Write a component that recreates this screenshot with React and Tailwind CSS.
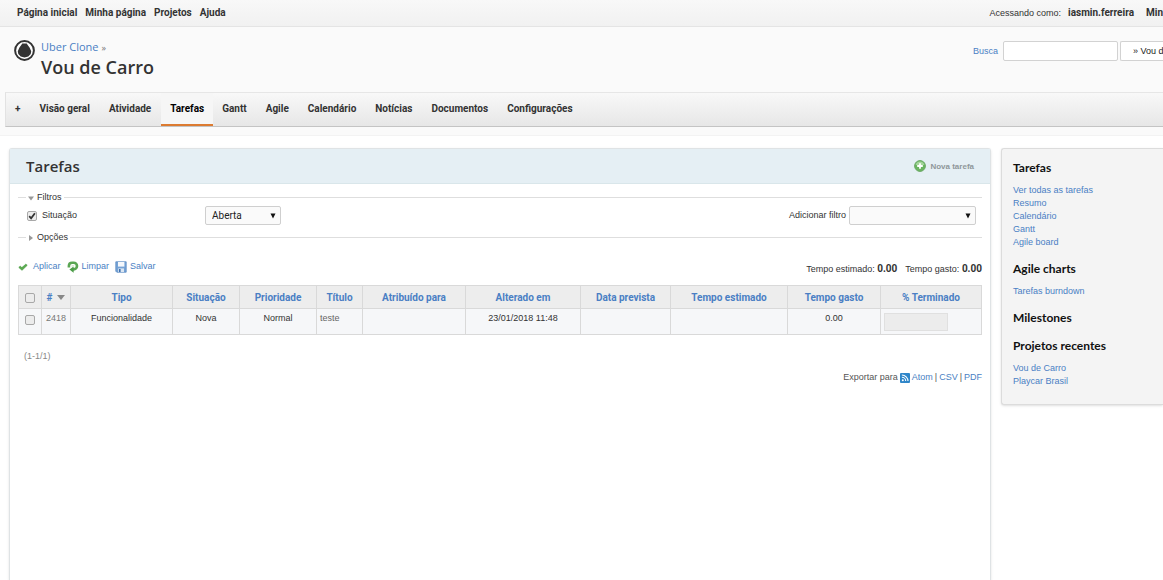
import React from "react";

const topLinks = ["Página inicial", "Minha página", "Projetos", "Ajuda"];
const tabs = [
  "Visão geral",
  "Atividade",
  "Tarefas",
  "Gantt",
  "Agile",
  "Calendário",
  "Notícias",
  "Documentos",
  "Configurações",
];
const columns = [
  "Tipo",
  "Situação",
  "Prioridade",
  "Título",
  "Atribuído para",
  "Alterado em",
  "Data prevista",
  "Tempo estimado",
  "Tempo gasto",
  "% Terminado",
];
const row = ["Funcionalidade", "Nova", "Normal", "teste", "", "23/01/2018 11:48", "", "", "0.00"];
const sections = [
  { title: "Tarefas", links: ["Ver todas as tarefas", "Resumo", "Calendário", "Gantt", "Agile board"] },
  { title: "Agile charts", links: ["Tarefas burndown"] },
  { title: "Milestones", links: [] },
  { title: "Projetos recentes", links: ["Vou de Carro", "Playcar Brasil"] },
];

const heading = "font-['Open_Sans','Noto_Sans',sans-serif]";
const strong = "font-[Roboto,Arial,sans-serif] text-[10px] font-bold";
const link = "text-[#4a7fc4] hover:underline";

function Logo() {
  return (
    <svg viewBox="0 0 21 21" className="size-[21px] shrink-0" aria-hidden="true">
      <circle cx="10.5" cy="10.5" r="9.4" fill="#fff" stroke="#333" strokeWidth="2" />
      <path
        d="M8.3 3.4h4.4l1.2 1.8 1.8 2.6 1.5 3.4-.5 2.8-2.4 2.4-3.8 1.1-3.8-1.1-2.4-2.4-.5-2.8 1.5-3.4 1.8-2.6z"
        fill="#333"
      />
    </svg>
  );
}

function PlusIcon() {
  return (
    <svg viewBox="0 0 12 12" className="size-3" aria-hidden="true">
      <circle cx="6" cy="6" r="5.4" fill="#6bb560" stroke="#6aa865" />
      <path d="M1.6 5a4.5 4.5 0 0 1 8.8 0z" fill="#a5d69b" />
      <path d="M6 3.2v5.6M3.2 6h5.6" stroke="#fff" strokeWidth="1.8" />
    </svg>
  );
}

function CheckIcon() {
  return (
    <svg viewBox="0 0 10 10" className="size-[10px]" aria-hidden="true">
      <path d="M.8 5.4l1.4-1.2 1.7 1.4 3.9-3.4 1.4 1.1-5.2 5z" fill="#5bab50" stroke="#459a3d" strokeWidth=".7" />
    </svg>
  );
}

function ReloadIcon() {
  return (
    <svg viewBox="0 0 12 12" className="size-3" aria-hidden="true">
      <path d="M1.9 6.4V4.9a3.2 3.2 0 0 1 3.2-3.1h1.6a3.3 3.3 0 0 1 0 6.6H5.6" fill="none" stroke="#5aa653" strokeWidth="2.6" />
      <path d="M6.6 5.6v6.2L2.4 8.6z" fill="#4c9d48" />
      <path d="M4.4 5.7V5c0-.6.3-.9.8-.9h1.4a.9.9 0 0 1 0 1.7z" fill="#d7ecd2" />
    </svg>
  );
}

function SaveIcon() {
  return (
    <svg viewBox="0 0 12 12" className="size-3" aria-hidden="true">
      <path d="M.8.8h10.4v10.4H1.8l-1-1z" fill="#76a3d6" stroke="#5d8cc3" strokeWidth=".8" />
      <path d="M3 1h6.4v4.6H3z" fill="#f5f8fc" />
      <path d="M3.2 7.4h5.8v3.6H3.2z" fill="#dbe6f2" />
      <path d="M4 8h1.6v3H4z" fill="#3d6fae" />
    </svg>
  );
}

function FeedIcon() {
  return (
    <svg viewBox="0 0 10 10" className="size-[10px]" aria-hidden="true">
      <rect width="10" height="10" rx="1" fill="#2f86c9" />
      <circle cx="2.8" cy="7.3" r="1" fill="#fff" />
      <path d="M1.9 4.3a3.8 3.8 0 0 1 3.8 3.8M1.9 2a6.1 6.1 0 0 1 6.1 6.1" fill="none" stroke="#fff" strokeWidth="1.1" />
    </svg>
  );
}

function Triangle({ open }) {
  return (
    <svg viewBox="0 0 6 6" className="size-[6px]" aria-hidden="true">
      <path d={open ? "M0 1.5h6L3 5.5z" : "M1 0v6l4-3z"} fill="#999" />
    </svg>
  );
}

function Select({ label, value, className }) {
  return (
    <span className={"grid items-center " + className}>
      <select
        aria-label={label}
        defaultValue={value}
        className="col-start-1 row-start-1 h-[19px] w-full appearance-none rounded-[2px] border border-[#cfcfcf] bg-[#fafafa] pl-[6px] font-[Roboto,Arial,sans-serif] text-[10px] text-[#222]"
      >
        <option>{value}</option>
      </select>
      <svg viewBox="0 0 6 6" className="pointer-events-none col-start-1 row-start-1 mr-[5px] size-[6px] justify-self-end" aria-hidden="true">
        <path d="M.5 .5h5L3 5.6z" fill="#111" />
      </svg>
    </span>
  );
}

function Checkbox({ id, label, checked }) {
  return (
    <span className="inline-grid size-[10px] shrink-0 place-items-center">
      <input
        id={id}
        aria-label={label}
        type="checkbox"
        defaultChecked={checked}
        className="peer col-start-1 row-start-1 size-[10px] appearance-none rounded-[2px] border border-[#a8a8a8] bg-[#ececec]"
      />
      <svg viewBox="0 0 10 10" className="pointer-events-none invisible col-start-1 row-start-1 size-[10px] peer-checked:visible" aria-hidden="true">
        <path d="M2.2 5.2l1.9 2.1 3.8-5" fill="none" stroke="#333" strokeWidth="1.8" />
      </svg>
    </span>
  );
}

export default function App() {
  return (
    <div className="flex min-h-screen flex-col overflow-x-hidden bg-white font-['Liberation_Sans',Arial,sans-serif] text-[9px] leading-[13px] text-[#333]">
      <div className="flex h-[27px] items-center justify-between overflow-hidden border-b border-[#e4e4e4] bg-linear-to-b from-[#f8f8f8] to-[#f1f1f1] pb-px pl-[17px]">
        <nav className={"flex gap-2 " + strong}>
          {topLinks.map((t) => (
            <a key={t} href="#">{t}</a>
          ))}
        </nav>
        <div className="flex items-baseline">
          <span>Acessando como:</span>
          <a href="#" className={"ml-[7px] " + strong}>iasmin.ferreira</a>
          <a href="#" className={"ml-3 w-[17px] whitespace-nowrap " + strong}>Minha conta</a>
        </div>
      </div>

      <header className="border-b border-[#f3f3f3] bg-[#fafafa] pb-2">
        <div className="flex h-[65px] items-start justify-between overflow-hidden">
          <div className={"flex gap-[6px] pt-[13px] pl-[14px] " + heading}>
            <Logo />
            <div>
              <p className="text-[11px] leading-[13px] text-[#777]">
                <a href="#" className={link}>Uber Clone</a> <span className="text-[9px]">»</span>
              </p>
              <h1 className="text-[18px] leading-[26px] font-semibold text-[#333]">Vou de Carro</h1>
            </div>
          </div>
          <form className="flex items-center pt-[14px]">
            <label htmlFor="q" className="mr-[5px] text-[#4a7fc4]">Busca</label>
            <input id="q" type="text" className="h-5 w-[115px] rounded-[2px] border border-[#d2d2d2] bg-white px-1" />
            <button type="button" className="ml-[2px] h-5 w-[43px] overflow-hidden rounded-l-[2px] border border-r-0 border-[#d2d2d2] bg-white pl-3 text-left whitespace-nowrap text-[#222]">
              » Vou de Carro
            </button>
          </form>
        </div>
        <nav className={"ml-[5px] flex h-[35px] items-stretch border-y border-l border-t-[#e6e6e6] border-b-[#c4c4c4] border-l-[#e2e2e2] bg-linear-to-b from-[#f8f8f8] to-[#e7e7e7] pl-[2px] " + strong}>
          <a href="#" className="flex items-center pr-[10px] pl-[7px] pb-[2px]">+</a>
          {tabs.map((t) => (
            <a
              key={t}
              href="#"
              className={
                t === "Tarefas"
                  ? "flex items-center border-b-2 border-[#dc7b31] bg-[#f6f6f6] px-[9px] text-black"
                  : "flex items-center pr-[10px] pl-[9px] pb-[2px]"
              }
            >
              {t}
            </a>
          ))}
        </nav>
      </header>

      <div className="flex flex-1 items-start gap-[10px] pt-3 pl-[9px]">
        <main className="min-w-0 flex-1 self-stretch rounded-t-[3px] border border-b-0 border-[#dfe3e5] shadow-sm">
          <div className="flex h-[35px] items-center justify-between border-b border-[#d9e6ea] bg-[#e5eff4] px-4">
            <h2 className={"text-[15px] leading-5 font-semibold text-[#333] " + heading}>Tarefas</h2>
            <a href="#" className="flex items-center gap-1 text-[8px] font-bold text-[#8f979a]">
              <PlusIcon />
              Nova tarefa
            </a>
          </div>

          <form className="px-2 pt-[7px]">
            <fieldset className="border-t border-[#dedede] pt-[2px] pb-[6px]">
              <legend className="ml-2 px-[2px]">
                <button type="button" className="flex items-center gap-[3px]">
                  <Triangle open />
                  Filtros
                </button>
              </legend>
              <div className="flex items-center pr-[6px] pl-[9px]">
                <div className="flex w-[178px] items-center gap-[5px]">
                  <Checkbox id="status" checked />
                  <label htmlFor="status">Situação</label>
                </div>
                <Select label="Situação" value="Aberta" className="w-[76px]" />
                <span className="ml-auto mr-[3px]">Adicionar filtro</span>
                <Select label="Adicionar filtro" value="" className="w-[127px]" />
              </div>
            </fieldset>
            <fieldset className="border-t border-[#dedede]">
              <legend className="ml-2 px-[2px]">
                <button type="button" className="flex items-center gap-[3px]">
                  <Triangle />
                  Opções
                </button>
              </legend>
            </fieldset>
          </form>

          <div className="flex items-start justify-between px-2 pt-4">
            <div className="flex gap-[6px] text-[#4a7fc4]">
              <button type="button" className="flex items-center gap-[5px]"><CheckIcon />Aplicar</button>
              <button type="button" className="flex items-center gap-[3px]"><ReloadIcon />Limpar</button>
              <button type="button" className="flex items-center gap-[3px]"><SaveIcon />Salvar</button>
            </div>
            <p className="flex gap-2 pt-[2px]">
              <span>Tempo estimado: <b className={strong}>0.00</b></span>
              <span>Tempo gasto: <b className={strong}>0.00</b></span>
            </p>
          </div>

          <div className="pt-[9px] pr-[10px] pl-2">
            <table className="w-full table-fixed border-collapse border border-[#d9d9d9] text-center">
              <colgroup>
                <col className="w-[23px]" />
                <col className="w-[29px]" />
                <col className="w-[102px]" />
                <col className="w-[67px]" />
                <col className="w-[77px]" />
                <col className="w-[46px]" />
                <col className="w-[103px]" />
                <col className="w-[115px]" />
                <col className="w-[90px]" />
                <col className="w-[117px]" />
                <col className="w-[93px]" />
                <col className="w-[101px]" />
              </colgroup>
              <thead>
                <tr className={"h-[23px] bg-[#ededed] text-[#4a7fc4] " + strong}>
                  <th className="border border-[#d9d9d9] pt-1 leading-none"><Checkbox label="Selecionar tudo" /></th>
                  <th className="border border-[#d9d9d9]">
                    <a href="#" className="flex items-center justify-center gap-[5px]">
                      #
                      <svg viewBox="0 0 8 5" className="h-[5px] w-2" aria-hidden="true"><path d="M0 0h8L4 5z" fill="#888" /></svg>
                    </a>
                  </th>
                  {columns.map((c) => (
                    <th key={c} className="border border-[#d9d9d9] whitespace-nowrap"><a href="#">{c}</a></th>
                  ))}
                </tr>
              </thead>
              <tbody>
                <tr className="h-[26px] bg-[#f6f7f9] align-top">
                  <td className="border border-[#d9d9d9] pt-[6px] leading-none"><Checkbox label="Selecionar 2418" /></td>
                  <td className="border border-[#d9d9d9] pt-[3px]"><a href="#" className="text-[#777]">2418</a></td>
                  {row.map((v, i) => (
                    <td
                      key={i}
                      className={
                        v === "teste"
                          ? "border border-[#d9d9d9] pt-[3px] pl-[3px] text-left text-[#666]"
                          : "border border-[#d9d9d9] pt-[3px] whitespace-nowrap"
                      }
                    >
                      {v}
                    </td>
                  ))}
                  <td className="border border-[#d9d9d9] pt-1 pl-[3px]">
                    <div className="h-[18px] w-16 border border-[#e0e0e0] bg-[#ececec]" />
                  </td>
                </tr>
              </tbody>
            </table>
          </div>

          <p className="pt-[15px] pl-[14px] text-[#888]">(1-1/1)</p>
          <p className="flex items-center justify-end gap-[2px] pt-2 pr-2 text-[#555]">
            Exportar para
            <FeedIcon />
            <a href="#" className={link}>Atom</a>|
            <a href="#" className={link}>CSV</a>|
            <a href="#" className={link}>PDF</a>
          </p>
        </main>

        <aside className="w-[162px] shrink-0 rounded-l-[3px] border border-r-0 border-[#dcdcdc] bg-[#f4f4f4] pt-[11px] pb-4 pl-[11px] shadow-sm">
          <div className="flex flex-col gap-3">
            {sections.map((s) => (
              <section key={s.title}>
                <h3 className="font-[Lato,sans-serif] text-[12px] leading-4 font-bold text-[#111]">{s.title}</h3>
                {s.links.length > 0 && (
                  <ul className="pt-2">
                    {s.links.map((l) => (
                      <li key={l}><a href="#" className={link}>{l}</a></li>
                    ))}
                  </ul>
                )}
              </section>
            ))}
          </div>
        </aside>
      </div>
    </div>
  );
}
